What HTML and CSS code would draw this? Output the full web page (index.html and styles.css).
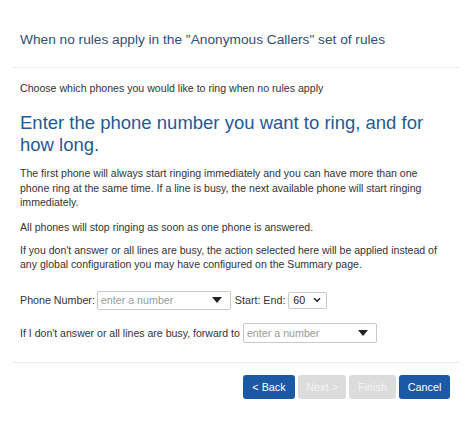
FILE: index.html
```html
<!DOCTYPE html>
<html>
<head>
<meta charset="utf-8">
<link rel="stylesheet" href="styles.css">
</head>
<body>
<div class="dialog">
  <div class="header">
    <h1 class="title">When no rules apply in the "Anonymous Callers" set of rules</h1>
  </div>
  <div class="body">
    <p class="intro">Choose which phones you would like to ring when no rules apply</p>
    <h2 class="heading">Enter the phone number you want to ring, and for how long.</h2>
    <p class="text">The first phone will always start ringing immediately and you can have more than one phone ring at the same time. If a line is busy, the next available phone will start ringing immediately.</p>
    <p class="text text-gap">All phones will stop ringing as soon as one phone is answered.</p>
    <p class="text">If you don't answer or all lines are busy, the action selected here will be applied instead of any global configuration you may have configured on the Summary page.</p>
    <div class="row row-phone">
      <span class="label">Phone Number:</span>
      <div class="combo combo-phone">
        <span class="placeholder">enter a number</span>
        <svg class="caret" width="10" height="6" viewBox="0 0 10 6"><path d="M0 0H10L5 6Z" fill="#222"/></svg>
      </div>
      <span class="label">Start: End:</span>
      <div class="select-small">
        <span class="val">60</span>
        <svg class="chev" width="8" height="6" viewBox="0 0 8 6"><path d="M1 1.2L4 4.2L7 1.2" fill="none" stroke="#222" stroke-width="1.6"/></svg>
      </div>
    </div>
    <div class="row row-forward">
      <span class="label label-forward">If I don't answer or all lines are busy, forward to</span>
      <div class="combo combo-forward">
        <span class="placeholder">enter a number</span>
        <svg class="caret" width="10" height="6" viewBox="0 0 10 6"><path d="M0 0H10L5 6Z" fill="#222"/></svg>
      </div>
    </div>
  </div>
  <div class="footer">
    <button class="btn btn-primary btn-back">&lt; Back</button>
    <button class="btn btn-disabled btn-next">Next &gt;</button>
    <button class="btn btn-disabled btn-finish">Finish</button>
    <button class="btn btn-primary btn-cancel">Cancel</button>
  </div>
</div>
</body>
</html>
```

FILE: styles.css
```css
html, body {
  margin: 0;
  padding: 0;
  background: #fff;
}
body {
  font-family: "Liberation Sans", Arial, sans-serif;
  color: #333;
}
.dialog {
  width: 448px;
  margin: 0 12px;
}
.header {
  padding: 30px 8px 17px;
  border-bottom: 1px solid #ececec;
}
.title {
  margin: 0;
  font-size: 13.7px;
  font-weight: normal;
  line-height: 20px;
  color: #2f4f74;
}
.body {
  padding: 13px 8px 19px;
  border-bottom: 1px solid #ececec;
}
.intro {
  margin: 0;
  font-size: 10.6px;
  line-height: 15px;
  color: #333;
}
.heading {
  margin: 16px 0 0;
  font-size: 18.5px;
  font-weight: normal;
  line-height: 22px;
  color: #1f5a96;
}
.text {
  max-width: 420px;
  margin: 10px 0 0;
  font-size: 10.55px;
  line-height: 14.5px;
  color: #333;
}
.text + .text {
  margin-top: 8.5px;
}
.text + .text-gap {
  margin-top: 10px;
}
.row {
  display: flex;
  align-items: center;
  font-size: 10.7px;
  color: #333;
}
.row-phone {
  margin-top: 19px;
}
.row-forward {
  margin-top: 13px;
}
.label {
  white-space: nowrap;
}
.label-forward {
  font-size: 10.55px;
}
.combo {
  box-sizing: border-box;
  height: 19px;
  border: 1px solid #c8c8c8;
  border-radius: 2px;
  display: flex;
  align-items: center;
  justify-content: space-between;
  padding: 0 8px 0 3px;
}
.combo-phone {
  width: 134px;
  margin: 0 4px 0 2px;
}
.combo-forward {
  width: 134px;
  height: 20px;
  margin-left: 3px;
}
.placeholder {
  color: #9a9a9a;
  font-size: 10.7px;
}
.select-small {
  box-sizing: border-box;
  width: 39px;
  height: 17px;
  margin-left: 3px;
  border: 1px solid #c8c8c8;
  border-radius: 2px;
  display: flex;
  align-items: center;
  justify-content: space-between;
  padding: 0 5px 0 4px;
  font-size: 10.7px;
  color: #222;
}
.footer {
  display: flex;
  justify-content: flex-end;
  gap: 3px;
  padding: 12px 10px 0 0;
}
.btn {
  box-sizing: border-box;
  height: 24px;
  border: none;
  border-radius: 3px;
  font-family: "Liberation Sans", Arial, sans-serif;
  font-size: 10.8px;
  padding: 0;
  color: #fff;
}
.btn-primary {
  background: #1b59a5;
}
.btn-disabled {
  background: #dcdcdc;
  color: #f4f4f4;
}
.btn-back { width: 52px; }
.btn-next { width: 48px; }
.btn-finish { width: 47px; }
.btn-cancel { width: 51px; }
```
